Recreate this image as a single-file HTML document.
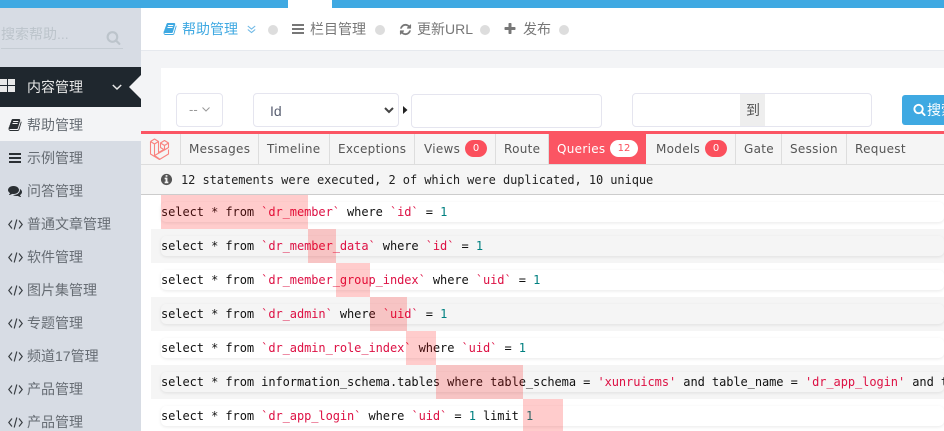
<!DOCTYPE html>
<html><head><meta charset="utf-8">
<style>
html,body{margin:0;padding:0;width:944px;height:431px;overflow:hidden;background:#f3f4f6}
body{position:relative;font-family:"Liberation Sans","Noto Sans CJK SC",sans-serif;font-size:14px;color:#555}
.a{position:absolute}
.t{position:absolute;white-space:nowrap;line-height:20px}
svg.i{position:absolute;overflow:visible}
.dot{position:absolute;width:10px;height:10px;border-radius:50%;background:#ddd;top:25px}
.m{position:absolute;left:27px;font-size:14px;color:#666c73;white-space:nowrap;line-height:20px}
.tab{position:absolute;top:134px;height:30px;line-height:30px;font-family:"DejaVu Sans",sans-serif;font-size:12px;letter-spacing:.3px;color:#555;white-space:nowrap;border-right:1px solid #ddd;box-sizing:border-box}
.b{position:absolute;height:17px;top:140px;border-radius:9px;background:#fb4f5c;color:#fff;text-align:center;font:10px/17px "DejaVu Sans",sans-serif}
.row{position:absolute;left:151px;width:793px;height:34px}
.code{position:absolute;left:161px;width:783px;height:20px;border-radius:5px;box-shadow:0 1px 3px rgba(0,0,0,.09);font:12px/20px "DejaVu Sans Mono",monospace;letter-spacing:-.07px;color:#111;white-space:pre;overflow:hidden}
.code s{text-decoration:none;color:#dd1144}.code u{text-decoration:none;color:#008080}
.p{position:absolute;height:34px;background:rgba(255,0,0,.2)}
</style></head><body>

<div class="a" style="left:0;top:0;width:288px;height:8px;background:#3fa9e2"></div>
<div class="a" style="left:288px;top:0;width:44px;height:8px;background:#fff"></div>
<div class="a" style="left:332px;top:0;width:612px;height:8px;background:#3fa9e2"></div>

<!-- sidebar -->
<div class="a" style="left:0;top:8px;width:141px;height:423px;background:#d7dce4"></div>
<div class="t" style="left:1px;top:24px;color:#bcc4cb;font-size:14px">搜索帮助...</div>
<svg class="i" style="left:106px;top:30px" width="15" height="15" viewBox="0 0 1792 1792"><path fill="#bcc4cb" d="M1216 832q0-185-131.5-316.5t-316.5-131.5-316.5 131.5-131.5 316.5 131.5 316.5 316.5 131.5 316.5-131.5 131.5-316.5zm512 832q0 52-38 90t-90 38q-54 0-90-38l-343-342q-179 124-399 124-143 0-273.5-55.5t-225-150-150-225-55.5-273.5 55.5-273.5 150-225 225-150 273.5-55.5 273.5 55.5 225 150 150 225 55.5 273.5q0 220-124 399l343 343q37 37 37 90z"/></svg>
<div class="a" style="left:1px;top:48px;width:122px;height:1px;background:#c5ccd3"></div>

<div class="a" style="left:0;top:67px;width:141px;height:40px;background:#1f272e"></div>
<div class="a" style="left:0;top:79px;width:7px;height:6px;background:#e8e8e8"></div>
<div class="a" style="left:8px;top:79px;width:7px;height:6px;background:#e8e8e8"></div>
<div class="a" style="left:0;top:86px;width:7px;height:6px;background:#e8e8e8"></div>
<div class="a" style="left:8px;top:86px;width:7px;height:6px;background:#e8e8e8"></div>
<div class="t" style="left:27px;top:77px;color:#e8e8e8">内容管理</div>
<svg class="i" style="left:112px;top:84px" width="10" height="7"><path d="M.8 1l4.200 4 4.200-4" fill="none" stroke="#e8e8e8" stroke-width="1.500"/></svg>
<svg class="i" style="left:129px;top:75px" width="12" height="24"><path d="M12 0L0 12l12 12z" fill="#f3f4f6"/></svg>

<div class="a" style="left:0;top:107px;width:141px;height:34px;background:#f3f4f6"></div>
<svg class="i" style="left:8px;top:118px" width="14" height="14" viewBox="0 0 1792 1792"><path fill="#2a2f33" d="M1703 478q40 57 18 129l-275 906q-19 64-76.5 107.5t-122.5 43.5h-923q-77 0-148.5-53.5t-99.5-131.5q-24-67-2-127 0-4 3-27t4-37q1-8-3-21.5t-3-19.5q2-11 8-21t16.5-23.5 16.5-23.5q23-38 45-91.5t30-91.5q3-10 .5-30t-.5-28q3-11 17-28t17-23q21-36 42-92t25-90q1-9-2.5-32t.5-28q4-13 22-30.5t22-22.5q19-26 42.5-84.5t27.5-96.5q1-8-3-25.5t-2-26.5q2-8 9-18t18-23 17-21q8-12 16.5-30.5t15-35 16-36 19.5-32 26.5-23.5 36-11.5 47.5 5.5l-1 3q38-9 51-9h761q74 0 114 56t18 130l-274 906q-36 119-71.5 153.5t-128.5 34.5h-869q-27 0-38 15-11 16-1 43 24 70 144 70h923q29 0 56-15.5t35-41.5l300-987q7-22 5-57 38 15 59 43zm-1064 2q-4 13 2 22.5t20 9.5h608q13 0 25.5-9.5t16.5-22.5l21-64q4-13-2-22.5t-20-9.5h-608q-13 0-25.5 9.5t-16.5 22.5zm-83 256q-4 13 2 22.5t20 9.5h608q13 0 25.5-9.5t16.5-22.5l21-64q4-13-2-22.5t-20-9.5h-608q-13 0-25.5 9.5t-16.5 22.5z"/></svg>
<div class="m" style="top:115px">帮助管理</div>
<div class="a" style="left:9px;top:153px;width:12px;height:2px;background:#2a2f33;box-shadow:0 4px 0 #2a2f33,0 8px 0 #2a2f33"></div>
<div class="m" style="top:148px">示例管理</div>
<svg class="i" style="left:8px;top:184px" width="14" height="14" viewBox="0 0 1792 1792"><path fill="#2a2f33" d="M1408 768q0 139-94 257t-256.5 186.5-353.5 68.5q-86 0-176-16-124 88-278 128-36 9-86 16h-3q-11 0-20.5-8t-11.5-21q-1-3-1-6.5t.5-6.5 2-6l2.5-5 3.5-5.5 4-5 4.5-5 4-4.5q5-6 23-25t26-29.5 22.5-29 25-38.5 20.5-44q-124-72-195-177t-71-224q0-139 94-257t256.5-186.5 353.5-68.5 353.5 68.5 256.5 186.5 94 257zm384 256q0 120-71 224.5t-195 176.5q10 24 20.5 44t25 38.5 22.5 29 26 29.5 23 25q1 1 4 4.5t4.5 5 4 5 3.5 5.5l2.5 5 2 6 .5 6.5-1 6.5q-3 14-13 22t-22 7q-50-7-86-16-154-40-278-128-90 16-176 16-271 0-472-132 58 4 88 4 161 0 309-45t264-129q125-92 192-212t67-254q0-77-23-152 129 71 204 178t75 230z"/></svg>
<div class="m" style="top:181px">问答管理</div>

<svg class="i" style="left:8px;top:219px" width="15" height="11"><path d="M4 1.5L.8 5.5 4 9.5M11 1.5l3.2 4-3.2 4M8.8.5L6.2 10.5" fill="none" stroke="#3a3f44" stroke-width="1.2"/></svg>
<div class="m" style="top:214px">普通文章管理</div>
<svg class="i" style="left:8px;top:252px" width="15" height="11"><path d="M4 1.5L.8 5.5 4 9.5M11 1.5l3.2 4-3.2 4M8.8.5L6.2 10.5" fill="none" stroke="#3a3f44" stroke-width="1.2"/></svg>
<div class="m" style="top:247px">软件管理</div>
<svg class="i" style="left:8px;top:285px" width="15" height="11"><path d="M4 1.5L.8 5.5 4 9.5M11 1.5l3.2 4-3.2 4M8.8.5L6.2 10.5" fill="none" stroke="#3a3f44" stroke-width="1.2"/></svg>
<div class="m" style="top:280px">图片集管理</div>
<svg class="i" style="left:8px;top:318px" width="15" height="11"><path d="M4 1.5L.8 5.5 4 9.5M11 1.5l3.2 4-3.2 4M8.8.5L6.2 10.5" fill="none" stroke="#3a3f44" stroke-width="1.2"/></svg>
<div class="m" style="top:313px">专题管理</div>
<svg class="i" style="left:8px;top:351px" width="15" height="11"><path d="M4 1.5L.8 5.5 4 9.5M11 1.5l3.2 4-3.2 4M8.8.5L6.2 10.5" fill="none" stroke="#3a3f44" stroke-width="1.2"/></svg>
<div class="m" style="top:346px">频道17管理</div>
<svg class="i" style="left:8px;top:384px" width="15" height="11"><path d="M4 1.5L.8 5.5 4 9.5M11 1.5l3.2 4-3.2 4M8.8.5L6.2 10.5" fill="none" stroke="#3a3f44" stroke-width="1.2"/></svg>
<div class="m" style="top:379px">产品管理</div>
<svg class="i" style="left:8px;top:417px" width="15" height="11"><path d="M4 1.5L.8 5.5 4 9.5M11 1.5l3.2 4-3.2 4M8.8.5L6.2 10.5" fill="none" stroke="#3a3f44" stroke-width="1.2"/></svg>
<div class="m" style="top:412px">产品管理</div>

<!-- header -->
<div class="a" style="left:141px;top:8px;width:803px;height:42px;background:#fff;border-bottom:1px solid #e6e9ee"></div>
<svg class="i" style="left:163px;top:22px" width="14" height="14" viewBox="0 0 1792 1792"><path fill="#3fa9e2" d="M1703 478q40 57 18 129l-275 906q-19 64-76.5 107.5t-122.5 43.5h-923q-77 0-148.5-53.5t-99.5-131.5q-24-67-2-127 0-4 3-27t4-37q1-8-3-21.5t-3-19.5q2-11 8-21t16.5-23.5 16.5-23.5q23-38 45-91.5t30-91.5q3-10 .5-30t-.5-28q3-11 17-28t17-23q21-36 42-92t25-90q1-9-2.5-32t.5-28q4-13 22-30.5t22-22.5q19-26 42.5-84.5t27.5-96.5q1-8-3-25.5t-2-26.5q2-8 9-18t18-23 17-21q8-12 16.5-30.5t15-35 16-36 19.5-32 26.5-23.5 36-11.5 47.5 5.5l-1 3q38-9 51-9h761q74 0 114 56t18 130l-274 906q-36 119-71.5 153.5t-128.5 34.5h-869q-27 0-38 15-11 16-1 43 24 70 144 70h923q29 0 56-15.5t35-41.5l300-987q7-22 5-57 38 15 59 43zm-1064 2q-4 13 2 22.5t20 9.5h608q13 0 25.5-9.5t16.5-22.5l21-64q4-13-2-22.5t-20-9.5h-608q-13 0-25.5 9.5t-16.5 22.5zm-83 256q-4 13 2 22.5t20 9.5h608q13 0 25.5-9.5t16.5-22.5l21-64q4-13-2-22.5t-20-9.5h-608q-13 0-25.5 9.5t-16.5 22.5z"/></svg>
<div class="t" style="left:182px;top:19px;color:#3fa9e2">帮助管理</div>
<svg class="i" style="left:247px;top:25px" width="9" height="9"><path d="M.8 1l3.700 3 3.700-3M.8 4.500l3.700 3 3.700-3" fill="none" stroke="#6fb9e6" stroke-width="1.100"/></svg>
<div class="dot" style="left:268px"></div>
<div class="a" style="left:292px;top:24px;width:12px;height:2px;background:#777;box-shadow:0 4px 0 #777,0 8px 0 #777"></div>
<div class="t" style="left:310px;top:19px;color:#777">栏目管理</div>
<div class="dot" style="left:375px"></div>
<svg class="i" style="left:399px;top:23px" width="13" height="13" viewBox="0 0 1792 1792"><path fill="#777" d="M1639 1056q0 5-1 7-64 268-268 434.5t-478 166.5q-146 0-282.5-55t-243.5-157l-129 129q-19 19-45 19t-45-19-19-45v-448q0-26 19-45t45-19h448q26 0 45 19t19 45-19 45l-137 137q71 66 161 102t187 36q134 0 250-65t186-179q11-17 53-117 8-23 30-23h192q13 0 22.5 9.5t9.5 22.5zm25-800v448q0 26-19 45t-45 19h-448q-26 0-45-19t-19-45 19-45l138-138q-148-137-349-137-134 0-250 65t-186 179q-11 17-53 117-8 23-30 23h-199q-13 0-22.5-9.5t-9.5-22.5v-7q65-268 270-434.5t480-166.5q146 0 284 55.5t245 156.5l130-129q19-19 45-19t45 19 19 45z"/></svg>
<div class="t" style="left:417px;top:19px;color:#777">更新URL</div>
<div class="dot" style="left:480px"></div>
<svg class="i" style="left:503px;top:22px" width="14" height="14" viewBox="0 0 1792 1792"><path fill="#777" d="M1600 736v192q0 40-28 68t-68 28h-416v416q0 40-28 68t-68 28h-192q-40 0-68-28t-28-68v-416h-416q-40 0-68-28t-28-68v-192q0-40 28-68t68-28h416v-416q0-40 28-68t68-28h192q40 0 68 28t28 68v416h416q40 0 68 28t28 68z"/></svg>
<div class="t" style="left:523px;top:19px;color:#777">发布</div>
<div class="dot" style="left:559px"></div>

<!-- card -->
<div class="a" style="left:161px;top:68px;width:783px;height:70px;background:#fff"></div>
<div class="a" style="left:176px;top:93px;width:47px;height:34px;box-sizing:border-box;border:1px solid #e5e5ef;border-radius:4px;background:#fff"></div>
<div class="t" style="left:189px;top:100px;color:#999;font-size:13px">--</div>
<svg class="i" style="left:202px;top:107px" width="8" height="6"><path d="M.5.5L4 4 7.500.5" fill="none" stroke="#999" stroke-width="1"/></svg>
<div class="a" style="left:253px;top:93px;width:146px;height:34px;box-sizing:border-box;border:1px solid #e5e5ef;border-radius:4px;background:#fff"></div>
<div class="t" style="left:270px;top:101px;color:#5a6072;font-size:14px">Id</div>
<svg class="i" style="left:384px;top:107px" width="10" height="7"><path d="M1 1l4 4 4-4" fill="none" stroke="#444" stroke-width="2"/></svg>
<svg class="i" style="left:403px;top:106px" width="5" height="8"><path d="M0 0l4.500 4L0 8z" fill="#222"/></svg>
<div class="a" style="left:411px;top:94px;width:191px;height:34px;box-sizing:border-box;border:1px solid #e5e5ef;border-radius:4px;background:#fff"></div>
<div class="a" style="left:632px;top:93px;width:240px;height:34px;box-sizing:border-box;border:1px solid #e5e5ef;border-radius:4px;background:#fff"></div>
<div class="a" style="left:740px;top:94px;width:25px;height:32px;background:#eee"></div>
<div class="t" style="left:746px;top:100px;color:#555">到</div>
<div class="a" style="left:902px;top:95px;width:60px;height:30px;border-radius:3px;background:#3fa9e2"></div>
<svg class="i" style="left:913px;top:103px" width="13" height="13" viewBox="0 0 1792 1792"><path fill="#fff" d="M1216 832q0-185-131.5-316.5t-316.5-131.5-316.5 131.5-131.5 316.5 131.5 316.5 316.5 131.5 316.5-131.5 131.5-316.5zm512 832q0 52-38 90t-90 38q-54 0-90-38l-343-342q-179 124-399 124-143 0-273.5-55.5t-225-150-150-225-55.5-273.5 55.5-273.5 150-225 225-150 273.5-55.5 273.5 55.5 225 150 150 225 55.5 273.5q0 220-124 399l343 343q37 37 37 90z"/></svg>
<div class="t" style="left:927px;top:100px;color:#fff">搜索</div>

<!-- debugbar -->
<div class="a" style="left:141px;top:131px;width:803px;height:300px;background:#fff"></div>
<div class="a" style="left:141px;top:131px;width:803px;height:3px;background:#fb5563"></div>
<div class="a" style="left:141px;top:134px;width:803px;height:31px;background:#f5f5f5;border-bottom:1px solid #ddd;box-sizing:border-box"></div>
<div class="tab" style="left:141px;width:40px"></div>
<svg class="i" style="left:149px;top:138px" width="24" height="23" fill="none" stroke="#f9837f" stroke-width="1.100" stroke-linejoin="round"><path d="M1.500 3.500l4-2.500 4 2.500v11l4.500-2.500M1.500 3.500v12.500l9 5.500 9-5.500v-4.500M5.500 6L1.500 3.500M5.500 6l4-2.500M5.500 6v11.500l5 3.500M5.500 17.500l9-5 5-3V5l-4-2.500L11.500 5v4.500l4 2.500 4-2.500M11.500 5l4 2.500 4-2.500M15.500 7.500v4.500"/></svg>
<div class="tab" style="left:181px;width:78px;padding-left:8px">Messages</div>
<div class="tab" style="left:259px;width:71px;padding-left:8px">Timeline</div>
<div class="tab" style="left:330px;width:85px;padding-left:8px">Exceptions</div>
<div class="tab" style="left:415px;width:81px;padding-left:9px">Views</div>
<div class="b" style="left:465px;width:22px">0</div>
<div class="tab" style="left:496px;width:53px;padding-left:8px">Route</div>
<div class="tab" style="left:549px;width:97px;padding-left:8px;background:#fb5563;color:#fff;border:0;height:30px">Queries</div>
<div class="b" style="left:610px;width:28px;background:#fff;color:#fb4f5c">12</div>
<div class="tab" style="left:646px;width:90px;padding-left:10px">Models</div>
<div class="b" style="left:705px;width:22px">0</div>
<div class="tab" style="left:736px;width:46px;padding-left:8px">Gate</div>
<div class="tab" style="left:782px;width:65px;padding-left:8px">Session</div>
<div class="tab" style="left:847px;width:80px;padding-left:8px;border:0">Request</div>

<div class="a" style="left:141px;top:165px;width:803px;height:30px;background:#f5f5f5;border-bottom:1px solid #ccc;box-sizing:border-box"></div>
<svg class="i" style="left:160px;top:173px" width="13" height="13" viewBox="0 0 1792 1792"><path fill="#555" d="M1152 1376v-160q0-14-9-23t-23-9h-96v-512q0-14-9-23t-23-9h-320q-14 0-23 9t-9 23v160q0 14 9 23t23 9h96v320h-96q-14 0-23 9t-9 23v160q0 14 9 23t23 9h448q14 0 23-9t9-23zm-128-896v-160q0-14-9-23t-23-9h-192q-14 0-23 9t-9 23v160q0 14 9 23t23 9h192q14 0 23-9t9-23zm640 416q0 209-103 385.500t-279.500 279.500-385.500 103-385.500-103-279.500-279.500-103-385.500 103-385.500 279.500-279.500 385.500-103 385.500 103 279.500 279.500 103 385.500z"/></svg>
<div class="t" style="left:181px;top:170px;font:12px/20px 'DejaVu Sans Mono',monospace;letter-spacing:-.07px;color:#222">12 statements were executed, 2 of which were duplicated, 10 unique</div>

<!-- rows -->
<div class="row" style="top:229px;background:#f5f5f5"></div>
<div class="row" style="top:297px;background:#f5f5f5"></div>
<div class="row" style="top:365px;background:#f5f5f5"></div>

<div class="code" style="top:202px">select * from <s>`dr_member`</s> where <s>`id`</s> = <u>1</u></div>
<div class="code" style="top:236px">select * from <s>`dr_member_data`</s> where <s>`id`</s> = <u>1</u></div>
<div class="code" style="top:270px">select * from <s>`dr_member_group_index`</s> where <s>`uid`</s> = <u>1</u></div>
<div class="code" style="top:304px">select * from <s>`dr_admin`</s> where <s>`uid`</s> = <u>1</u></div>
<div class="code" style="top:338px">select * from <s>`dr_admin_role_index`</s> where <s>`uid`</s> = <u>1</u></div>
<div class="code" style="top:372px">select * from information_schema.tables where table_schema = <s>'xunruicms'</s> and table_name = <s>'dr_app_login'</s> and table_type = <s>'BASE TABLE'</s></div>
<div class="code" style="top:406px">select * from <s>`dr_app_login`</s> where <s>`uid`</s> = <u>1</u> limit <u>1</u></div>

<div class="p" style="left:161px;top:195px;width:147px"></div>
<div class="p" style="left:308px;top:229px;width:28px"></div>
<div class="p" style="left:336px;top:263px;width:34px"></div>
<div class="p" style="left:370px;top:297px;width:37px"></div>
<div class="p" style="left:406px;top:331px;width:30px"></div>
<div class="p" style="left:436px;top:365px;width:87px"></div>
<div class="p" style="left:523px;top:399px;width:40px"></div>
</body></html>
